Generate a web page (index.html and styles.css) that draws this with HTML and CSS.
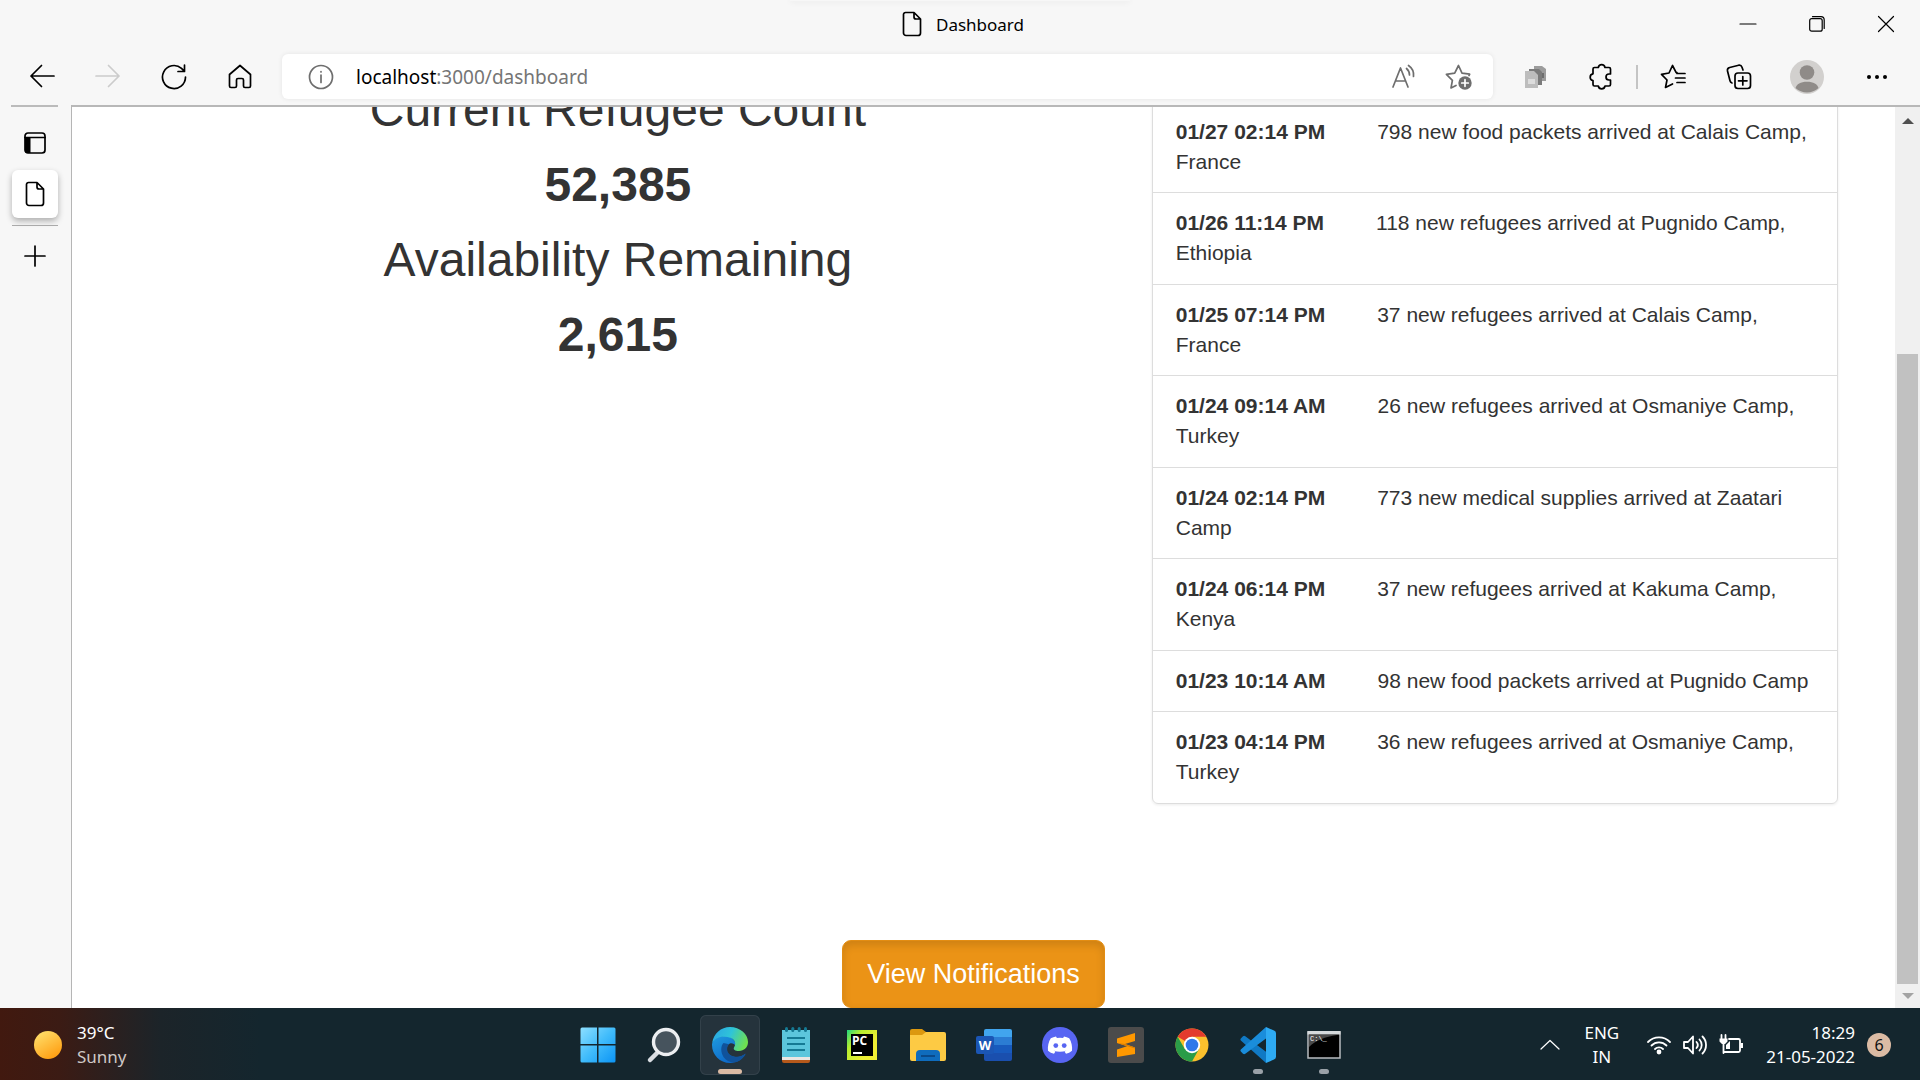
FILE: index.html
```html
<!DOCTYPE html>
<html lang="en">
<head>
<meta charset="utf-8">
<title>Dashboard</title>
<link rel="stylesheet" href="styles.css">
</head>
<body>
<header class="titlebar">
  <div class="title">
    <svg width="20" height="26" viewBox="0 0 20 26" class="line"><path d="M3.500 1.500h8.500l6.500 6.500v14a2.500 2.500 0 0 1-2.500 2.500h-12a2.500 2.500 0 0 1-2.500-2.500v-18.500a2 2 0 0 1 2-2zM12 1.500v4.500a2 2 0 0 0 2 2h4.500"/></svg>
    <span>Dashboard</span>
  </div>
  <div class="window-controls">
    <button aria-label="Minimize"><svg width="16" height="16" viewBox="0 0 16 16" class="line thin"><path d="M0 8h16"/></svg></button>
    <button aria-label="Restore"><svg width="16" height="16" viewBox="0 0 16 16" class="line thin"><rect x=".7" y="2.700" width="12.500" height="12.500" rx="2"/><path d="M3.500 .7h8.500a3.200 3.200 0 0 1 3.200 3.200v8.500"/></svg></button>
    <button aria-label="Close"><svg width="16" height="16" viewBox="0 0 16 16" class="line thin"><path d="M.5 .5l15 15M15.500 .5l-15 15"/></svg></button>
  </div>
</header>

<nav class="toolbar" aria-label="Browser">
  <div class="nav-buttons">
    <button aria-label="Back"><svg width="26" height="26" viewBox="0 0 26 26" class="line"><path d="M25 12H2M12.500 1.500L2 12l10.500 10.500"/></svg></button>
    <button aria-label="Forward" disabled><svg width="26" height="26" viewBox="0 0 26 26" class="line"><path d="M1 12h23M13.500 1.500L24 12 13.500 22.500"/></svg></button>
    <button aria-label="Refresh"><svg width="26" height="26" viewBox="0 0 26 26" class="line"><path d="M24.500 13a11.500 11.500 0 1 1-4-8.700l3 3M23.500 1v6.500h-6.500"/></svg></button>
    <button aria-label="Home"><svg width="26" height="26" viewBox="0 0 26 26" class="line"><path d="M2.500 10.500L13 1.500l10.500 9v11.500a1.500 1.500 0 0 1-1.500 1.500h-4a1.500 1.500 0 0 1-1.500-1.500v-6a1.500 1.500 0 0 0-1.500-1.500h-4a1.500 1.500 0 0 0-1.500 1.500v6a1.500 1.500 0 0 1-1.500 1.500h-4A1.500 1.500 0 0 1 2.500 22z"/></svg></button>
  </div>
  <div class="address">
    <button aria-label="Site information" class="grey"><svg width="26" height="26" viewBox="0 0 26 26" class="line"><circle cx="13" cy="13" r="11.500"/><path d="M13 11v7.500M13 7.500v.5"/></svg></button>
    <a class="url" href="#">localhost<span class="url-path">:3000/dashboard</span></a>
    <button aria-label="Read aloud" class="grey"><svg width="26" height="26" viewBox="0 0 26 26" class="line"><path d="M2 23L9.500 4 17 23M4.500 17h10M15.500 4.500c2 1.700 3 4 3 6.500M17.500 1.500c3.700 2.500 5.500 6.500 5 11"/></svg></button>
    <button aria-label="Add to favorites" class="grey"><svg width="28" height="28" viewBox="0 0 28 28" class="line"><path d="M24 12.500l.7-1.300-7.700-1L13.500 2.500 9.700 10.200l-8.300 1.200 6 6L6 25l5-2.500"/><circle cx="20" cy="20" r="6.700" fill="currentColor" stroke="none"/><path d="M20 16.700v6.600M16.700 20h6.600" stroke="#fff"/></svg></button>
  </div>
  <div class="tools">
    <button aria-label="Page extension"><svg width="24" height="24" viewBox="0 0 24 24"><path d="M11 1h8l4 3v12H11z" fill="#9c9c9c"/><path d="M6 4h10l3 3v13H6z" fill="#7b7b7b"/><path d="M2 6h9l4 4v13H2z" fill="#bdbdbd"/><path d="M5 14h7v5H5z" fill="#dcdcdc"/><path d="M19 8h2v5h-2z" fill="#6d6d6d"/></svg></button>
    <button aria-label="Extensions"><svg width="26" height="26" viewBox="0 0 26 26" class="line"><path d="M6.500 3.500h3.800a3.400 3.400 0 0 1 6.700 0h4a1.500 1.500 0 0 1 1.500 1.500v5h-1.500a3 3 0 0 0 0 6h1.500v4.500a1.500 1.500 0 0 1-1.500 1.500h-4a3.400 3.400 0 0 1-6.700 0H6.500A1.500 1.500 0 0 1 5 20.500v-4a3.400 3.400 0 0 1 0-6.700V5a1.500 1.500 0 0 1 1.500-1.500z"/></svg></button>
    <span class="separator"></span>
    <button aria-label="Favorites"><svg width="26" height="26" viewBox="0 0 26 26" class="line"><path d="M17 8.700h-.8L12.500 1.500 9 9 1.500 10.300l5.500 5.700L5.500 23.500l7-3.500M17 9.500h8M15.500 14H25M17 18.500h8"/></svg></button>
    <button aria-label="Collections"><svg width="26" height="26" viewBox="0 0 26 26" class="line"><rect x="9" y="9" width="15.500" height="15.500" rx="3"/><path d="M16.800 12.500v8.500M12.500 16.800h8.500M6 19A3 3 0 0 1 4 16.800L1.500 7A3 3 0 0 1 3.700 3.500l9-2.300A3 3 0 0 1 16 3.200L17 6"/></svg></button>
    <button aria-label="Profile" class="wide"><svg width="34" height="34" viewBox="0 0 34 34"><circle cx="17" cy="17" r="17" fill="#d2d0ce"/><circle cx="17" cy="12.500" r="7.300" fill="#8f8b88"/><path d="M5.500 28c1-4 5-6.300 11.500-6.300S27.500 24 28.500 28A17 17 0 0 1 5.500 28z" fill="#8f8b88"/></svg></button>
    <button aria-label="Settings and more" class="wide"><svg width="26" height="26" viewBox="0 0 26 26"><circle cx="5" cy="13" r="2"/><circle cx="13" cy="13" r="2"/><circle cx="21" cy="13" r="2"/></svg></button>
  </div>
</nav>

<div class="workspace">
  <aside class="tabs">
    <button aria-label="Tab actions"><svg width="22" height="22" viewBox="0 0 22 22" class="line"><rect x="1" y="1" width="20" height="20" rx="3"/><path d="M1 5.500h20" /><path d="M1 5.500h5.500V21H3a2 2 0 0 1-2-2z" fill="currentColor" stroke="none"/></svg></button>
    <button aria-label="Dashboard tab" class="tab-active"><svg width="20" height="26" viewBox="0 0 20 26" class="line"><path d="M3.500 1.500h8.500l6.500 6.500v14a2.500 2.500 0 0 1-2.500 2.500h-12a2.500 2.500 0 0 1-2.500-2.500v-18.500a2 2 0 0 1 2-2zM12 1.500v4.500a2 2 0 0 0 2 2h4.500"/></svg></button>
    <span class="tab-rule"></span>
    <button aria-label="New tab"><svg width="22" height="22" viewBox="0 0 22 22" class="line"><path d="M11 1v20M1 11h20"/></svg></button>
  </aside>

  <main class="page">
    <div class="container">
      <section class="stats">
        <h2>Current Refugee Count</h2>
        <h2><strong>52,385</strong></h2>
        <h2>Availability Remaining</h2>
        <h2><strong>2,615</strong></h2>
      </section>
      <ul class="feed">
        <li><time>01/27 02:14 PM</time>798 new food packets arrived at Calais Camp, France</li>
        <li><time>01/26 11:14 PM</time>118 new refugees arrived at Pugnido Camp, Ethiopia</li>
        <li><time>01/25 07:14 PM</time>37 new refugees arrived at Calais Camp, France</li>
        <li><time>01/24 09:14 AM</time>26 new refugees arrived at Osmaniye Camp, Turkey</li>
        <li><time>01/24 02:14 PM</time>773 new medical supplies arrived at Zaatari Camp</li>
        <li><time>01/24 06:14 PM</time>37 new refugees arrived at Kakuma Camp, Kenya</li>
        <li><time>01/23 10:14 AM</time>98 new food packets arrived at Pugnido Camp</li>
        <li><time>01/23 04:14 PM</time>36 new refugees arrived at Osmaniye Camp, Turkey</li>
      </ul>
    </div>
    <div class="actions"><button class="notify">View Notifications</button></div>
  </main>

  <div class="scrollbar">
    <svg width="12" height="8" viewBox="0 0 12 8"><path d="M0 7l6-6 6 6z" fill="#505050"/></svg>
    <div class="track"><div class="thumb"></div></div>
    <svg width="12" height="8" viewBox="0 0 12 8"><path d="M0 1l6 6 6-6z" fill="#a3a3a3"/></svg>
  </div>
</div>

<footer class="taskbar">
  <div class="weather">
    <svg width="28" height="28" viewBox="0 0 28 28"><defs><linearGradient id="sun" x1=".2" y1="0" x2=".8" y2="1"><stop offset="0" stop-color="#ffdf6b"/><stop offset="1" stop-color="#ff9a0c"/></linearGradient></defs><circle cx="14" cy="14" r="14" fill="url(#sun)"/></svg>
    <div class="stack"><span>39°C</span><span class="dim">Sunny</span></div>
  </div>

  <div class="apps">
    <button aria-label="Start"><svg width="36" height="36" viewBox="0 0 36 36"><defs><linearGradient id="win" gradientUnits="userSpaceOnUse" x1="0" y1="0" x2="36" y2="36"><stop offset="0" stop-color="#8fe0ff"/><stop offset=".5" stop-color="#41bcfb"/><stop offset="1" stop-color="#0a93f5"/></linearGradient></defs><path fill="url(#win)" d="M2 .5h15v16.500H.5V2A1.500 1.500 0 0 1 2 .5zM18.500 .5H34A1.500 1.500 0 0 1 35.500 2v15h-17zM.5 18.500H17v17H2A1.500 1.500 0 0 1 .5 34zM18.500 18.500h17V34a1.500 1.500 0 0 1-1.500 1.500H18.500z"/></svg></button>
    <button aria-label="Search"><svg width="36" height="36" viewBox="0 0 36 36"><path d="M11.500 25.500L4 33" stroke="#d9dde2" stroke-width="4.500" stroke-linecap="round"/><circle cx="20" cy="15" r="12.500" fill="#46535d" stroke="#eceef1" stroke-width="3.400"/></svg></button>
    <button aria-label="Edge" class="app-active"><svg width="36" height="36" viewBox="0 0 36 36"><defs><linearGradient id="e1" x1="0" y1=".2" x2="1" y2=".5"><stop offset="0" stop-color="#2aa6e4"/><stop offset=".5" stop-color="#2fc4d8"/><stop offset="1" stop-color="#6fe04f"/></linearGradient><linearGradient id="e2" x1="0" y1="0" x2=".7" y2="1"><stop offset="0" stop-color="#1f9be0"/><stop offset="1" stop-color="#0b62c4"/></linearGradient></defs><path fill="url(#e2)" d="M0 17C1 12 6 9 12 9c8 0 12 5 12 10-2-3-6-4-8-1-3 4-1 11 7 12 5 .5 8-1 10.500-3.500C31 32 25 36 18 36 8 36 0 28 0 18z"/><path fill="#10529b" d="M11.500 16c-3 3-3 9 0 14 3 4 8 6.300 13 5 4-1.500 7.500-4.500 9.300-8.300-1 .3-4.800 3.300-10.300 3-8-.7-10.500-8-6.500-12.500z"/><path fill="url(#e1)" d="M.2 16C1.500 6.500 9 0 18 0c10 0 18 7 18 15 0 5.500-4 9-9 9-4 0-6-1.500-5-3.500 1.500-2 2.500-7-3-9.500C12 8.500 4 9.500 .2 16z"/></svg></button>
    <button aria-label="Notepad"><svg width="36" height="36" viewBox="0 0 36 36"><path d="M4 3h28v29H4z" fill="#5cc6dc"/><path d="M4 30h28v4H4z" fill="#e9e6e2"/><path d="M4 33h28v1a2 2 0 0 1-2 2H6a2 2 0 0 1-2-2z" fill="#b5591b"/><g fill="#157a94"><rect x="7" y="0" width="3" height="5" rx="1.500"/><rect x="13.300" y="0" width="3" height="5" rx="1.500"/><rect x="19.700" y="0" width="3" height="5" rx="1.500"/><rect x="26" y="0" width="3" height="5" rx="1.500"/><path d="M9 10h18v2H9zM9 16h18v2H9zM9 22h18v2H9z"/></g></svg></button>
    <button aria-label="PyCharm"><svg width="32" height="32" viewBox="0 0 32 32"><defs><linearGradient id="pc" x1="0" y1="0" x2=".8" y2=".6"><stop offset="0" stop-color="#1fd77f"/><stop offset=".4" stop-color="#b5ec2f"/><stop offset="1" stop-color="#f0ee34"/></linearGradient></defs><path fill="url(#pc)" d="M1 1h30v30H1z"/><path d="M5 5h22v22H5z"/><path d="M7 23h9v2H7z" fill="#fff"/><text x="6" y="16" class="glyph-pc">PC</text></svg></button>
    <button aria-label="File Explorer"><svg width="36" height="36" viewBox="0 0 36 36"><path d="M0 4a2 2 0 0 1 2-2h10l4 3v6H0z" fill="#dc980f"/><path d="M0 8h12l4-3h18a2 2 0 0 1 2 2v25a2 2 0 0 1-2 2H2a2 2 0 0 1-2-2z" fill="#fdca44"/><path d="M6 34V27a4 4 0 0 1 4-4h16a4 4 0 0 1 4 4v7z" fill="#0f6cbd"/><rect x="11" y="28" width="14" height="2" fill="#0a4a8a"/></svg></button>
    <button aria-label="Word"><svg width="36" height="36" viewBox="0 0 36 36"><path d="M10 2h24a2 2 0 0 1 2 2v6H8V4a2 2 0 0 1 2-2z" fill="#41a5ee"/><path d="M8 10h28v8H8z" fill="#2b7cd3"/><path d="M8 18h28v8H8z" fill="#185abd"/><path d="M8 26h28v6a2 2 0 0 1-2 2H10a2 2 0 0 1-2-2z" fill="#1a4fae"/><rect x="0" y="9" width="18" height="18" rx="2" fill="#1b56b5"/><text x="9" y="23" text-anchor="middle" class="glyph-w">W</text></svg></button>
    <button aria-label="Discord"><svg width="36" height="36" viewBox="0 0 36 36"><circle cx="18" cy="18" r="18" fill="#5865f2"/><path fill="#fff" d="M14 9.500l.9 1.600a21 21 0 0 1 6.200 0l.9-1.600c2 .3 3.700.9 5.200 1.700 2.300 3.500 3.300 8 2.800 12.500-1.800 1.500-3.800 2.500-6 3l-1.500-2.300 2-1c-4 1.700-9 1.700-13 0l2 1-1.500 2.300c-2.200-.5-4.200-1.500-6-3-.5-4.500.5-9 2.800-12.500A17 17 0 0 1 14 9.500z"/><circle cx="13.800" cy="18.600" r="2.400" fill="#5865f2"/><circle cx="22.200" cy="18.600" r="2.400" fill="#5865f2"/></svg></button>
    <button aria-label="Sublime Text"><svg width="36" height="36" viewBox="0 0 36 36"><rect width="36" height="36" rx="3" fill="#4b4b4b"/><path d="M27 6v8l-10 3 10 3.500v6.500L9 30v-7.500l10-3.200-10-3.300V11.500z" fill="#ff9800"/><path d="M9 16l18 5.500v-1L17 17z" fill="#d97c00"/></svg></button>
    <button aria-label="Chrome"><svg width="34" height="34" viewBox="0 0 34 34"><circle cx="17" cy="17" r="16.500" fill="#fbc02d"/><path d="M17 17L2.700 8.800A16.500 16.500 0 0 1 31.300 8.800H17z" fill="#e33b2e"/><path d="M2.700 8.800A16.500 16.500 0 0 0 17 33.500L24 21 17 17 9.800 21z" fill="#2a9c48"/><circle cx="17" cy="17" r="8.200" fill="#fff"/><circle cx="17" cy="17" r="6.300" fill="#2f78ea"/></svg></button>
    <button aria-label="Visual Studio Code" class="app-running"><svg width="36" height="36" viewBox="0 0 36 36"><path d="M26 36L.8 13.500a1.500 1.500 0 0 1 0-2L3 9.300a1.800 1.800 0 0 1 2.300 0L27 25.500z" fill="#1079c4"/><path d="M26 0v11.500L5.300 26.700a1.800 1.800 0 0 1-2.300 0L.8 24.500a1.500 1.500 0 0 1 0-2z" fill="#1a8ddb"/><path d="M26 0l8 3.500a3 3 0 0 1 2 3v23a3 3 0 0 1-2 3L26 36z" fill="#2eaaf2"/></svg></button>
    <button aria-label="Command Prompt" class="app-running"><svg width="34" height="30" viewBox="0 0 34 30"><rect x="1" y="2" width="32" height="26" fill="#000" stroke="#b8bcc0" stroke-width="1.500"/><path d="M.5 1h33v3.500H.5z" fill="#d5d9dc"/><path d="M2 5h28C18 7 9 10 2 17z" fill="#4a4a4a"/><text x="3" y="11" class="glyph-cmd">C:\_</text></svg></button>
  </div>

  <div class="tray">
    <button aria-label="Show hidden icons"><svg width="20" height="12" viewBox="0 0 20 12" class="line thin"><path d="M1 10l9-8.500 9 8.500"/></svg></button>
    <div class="stack centered"><span>ENG</span><span>IN</span></div>
    <div class="status">
      <svg width="24" height="20" viewBox="0 0 24 20" class="line heavy"><path d="M1 7a15.500 15.500 0 0 1 22 0M4.500 10.500a10.600 10.600 0 0 1 15 0M8 14a5.700 5.700 0 0 1 8 0"/><circle cx="12" cy="17" r="1.500" fill="currentColor"/></svg>
      <svg width="24" height="20" viewBox="0 0 24 20" class="line heavy"><path d="M1 7h4l5-5.500v17L5 13H1zM13.500 7a4.500 4.500 0 0 1 0 6M16.500 4.500a8 8 0 0 1 0 11M19.500 1.500a12 12 0 0 1 0 17"/></svg>
      <svg width="24" height="20" viewBox="0 0 24 20" class="line heavy"><path d="M10 4h9.500a1.500 1.500 0 0 1 1.500 1.500v10a1.500 1.500 0 0 1-1.500 1.500H5M4.500 9v9"/><path d="M2.500 0v4M6.500 0v4"/><path d="M.5 3.500h8v3L6 9H3L.5 6.500zM11 6v8H7v-4zM21.500 8H24v5h-2.500z" fill="currentColor" stroke="none"/></svg>
    </div>
    <div class="stack right"><span>18:29</span><span>21-05-2022</span></div>
    <span class="badge">6</span>
  </div>
</footer>
</body>
</html>
```
FILE: styles.css
```css
* { box-sizing: border-box; }

body {
  margin: 0;
  height: 100vh;
  display: grid;
  grid-template-rows: 48px 57px minmax(0, 1fr) 72px;
  background: #f7f7f7;
  color: #000;
  font-family: "Noto Sans", "Open Sans", sans-serif;
  font-size: 17px;
  overflow: hidden;
}

button {
  display: flex;
  align-items: center;
  justify-content: center;
  margin: 0;
  padding: 0;
  border: 0;
  background: none;
  color: inherit;
  font: inherit;
}

svg { display: block; flex: none; overflow: visible; }
.line { fill: none; stroke: currentColor; stroke-width: 1.7; stroke-linecap: round; stroke-linejoin: round; }
.thin { stroke-width: 1.2; }
.heavy { stroke-width: 1.8; }

/* Title bar */
.titlebar {
  display: grid;
  grid-template-columns: 1fr auto 1fr;
  align-items: center;
}
.titlebar::before {
  content: "";
  align-self: start;
  grid-column: 2;
  grid-row: 1;
  width: 340px;
  height: 1px;
  box-shadow: 0 0 6px rgba(0, 0, 0, 0.2);
}
.title {
  grid-column: 2;
  grid-row: 1;
  display: flex;
  align-items: center;
  justify-content: center;
  gap: 14px;
  padding-left: 6px;
}
.window-controls { grid-column: 3; grid-row: 1; display: flex; justify-content: flex-end; }
.window-controls button { width: 69px; height: 48px; }

/* Toolbar */
.toolbar {
  display: flex;
  align-items: center;
  padding-left: 9px;
  padding-right: 8px;
}
.nav-buttons, .tools { display: flex; align-items: center; }
.nav-buttons button { width: 66px; height: 45px; }
.nav-buttons button:disabled { color: #ccc; }
.address {
  flex: 1;
  display: flex;
  align-items: center;
  height: 45px;
  margin-left: 9px;
  padding: 0 20px 0 26px;
  background: #fff;
  border-radius: 6px;
  box-shadow: 0 0 5px rgba(0, 0, 0, 0.08);
}
.address button { width: 26px; }
.address button:last-child { width: 28px; margin-left: 28px; }
.grey { color: #6e6e6e; }
.url { flex: 1; margin-left: 22px; color: #000; font-size: 19px; text-decoration: none; }
.url-path { color: #757575; }
.tools { margin-left: 9px; }
.tools button { width: 66px; height: 45px; }
.tools .wide { width: 70px; }
.separator { width: 2px; height: 24px; margin: 0 2px; background: #c4c4c4; }

/* Browser body */
.workspace { display: flex; min-height: 0; }
.tabs {
  width: 72px;
  display: flex;
  flex-direction: column;
  align-items: center;
  padding-right: 2px;
  border-right: 1px solid #b5b5b5;
}
.tabs::before { content: ""; width: 47px; height: 2px; background: #bbb; }
.tabs button { width: 46px; height: 48px; }
.tabs button:first-of-type { margin: 12px 0 3px; }
.tabs .tab-active {
  background: #fff;
  border-radius: 6px;
  box-shadow: 0 3px 6px rgba(0, 0, 0, 0.3);
}
.tab-rule { width: 46px; height: 1px; margin: 7px 0 6px; background: #aaa; }

.page {
  flex: 1;
  display: flex;
  flex-direction: column;
  justify-content: flex-end;
  min-width: 0;
  overflow: hidden;
  background: #fff;
  border-top: 2px solid #b8b8b8;
  color: #333;
  font-family: "Liberation Sans", Arial, sans-serif;
  font-size: 21px;
  line-height: 30px;
}
.container {
  width: 100%;
  max-width: 1755px;
  margin: 0 auto 136px;
  display: grid;
  grid-template-columns: 7fr 5fr;
}
.stats { padding: 0 22px; text-align: center; }
.stats h2 { margin: 0 0 22px; font-size: 48px; font-weight: 400; line-height: 53px; }
.feed {
  margin: 18px 23px 0 22px;
  padding: 0;
  list-style: none;
  border: 1px solid #ddd;
  border-radius: 6px;
  box-shadow: 0 1px 3px rgba(0, 0, 0, 0.08);
}
.feed li { padding: 15px 23px; }
.feed li:nth-child(even) { padding-bottom: 16px; }
.feed li + li { border-top: 1px solid #ddd; }
.feed time { margin-right: 52px; font-weight: 700; }
.actions { display: flex; justify-content: center; padding-right: 20px; }
.notify {
  padding: 15px 24px;
  border: 1px solid #e38d13;
  border-radius: 9px;
  background: #eb9316;
  color: #fff;
  font-size: 27px;
  line-height: 36px;
  box-shadow: inset 0 4px 8px rgba(0, 0, 0, 0.13);
}

.scrollbar {
  width: 25px;
  display: flex;
  flex-direction: column;
  align-items: center;
  padding: 10px 0 8px;
  background: #f0f0f0;
  border-top: 2px solid #b8b8b8;
}
.track { flex: 1; align-self: stretch; display: flex; align-items: flex-end; margin: 8px 2px; }
.thumb { width: 100%; height: 74%; background: #c1c1c1; }

/* Taskbar */
.taskbar {
  display: grid;
  grid-template-columns: 1fr auto 1fr;
  align-items: center;
  padding-top: 2px;
  background: linear-gradient(90deg, #41190f 0, #3b1b14 60px, #1c2429 160px, #14262e 260px);
  color: #fff;
}
.weather { display: flex; align-items: center; gap: 15px; padding-left: 34px; }
.stack { display: flex; flex-direction: column; line-height: 24px; }
.centered { align-items: center; }
.right { align-items: flex-end; }
.dim { color: #cfc8c6; }
.apps { display: flex; gap: 6px; padding-left: 2px; }
.apps button { position: relative; width: 60px; height: 60px; border-radius: 6px; }
.apps .app-active { background: #25333c; box-shadow: inset 0 0 0 1px #33414a; }
.app-active::after, .app-running::after {
  content: "";
  position: absolute;
  bottom: 1px;
  width: 10px;
  height: 5px;
  border-radius: 3px;
  background: #9aa1a8;
}
.app-active::after { width: 24px; background: #dbbba4; }
.glyph-pc { fill: #fff; font: 700 12px "Open Sans", sans-serif; }
.glyph-w { fill: #fff; font: 700 13px "Open Sans", sans-serif; }
.glyph-cmd { fill: #fff; font: 7px "Liberation Mono", monospace; }
.tray { display: flex; align-items: center; justify-content: flex-end; padding-right: 29px; }
.tray .centered { margin: 0 28px 0 25px; }
.status { display: flex; gap: 12px; margin-right: 23px; }
.badge {
  width: 24px;
  height: 24px;
  margin-left: 12px;
  border-radius: 12px;
  background: #dbbba4;
  color: #111;
  font-size: 16px;
  line-height: 24px;
  text-align: center;
}
```
